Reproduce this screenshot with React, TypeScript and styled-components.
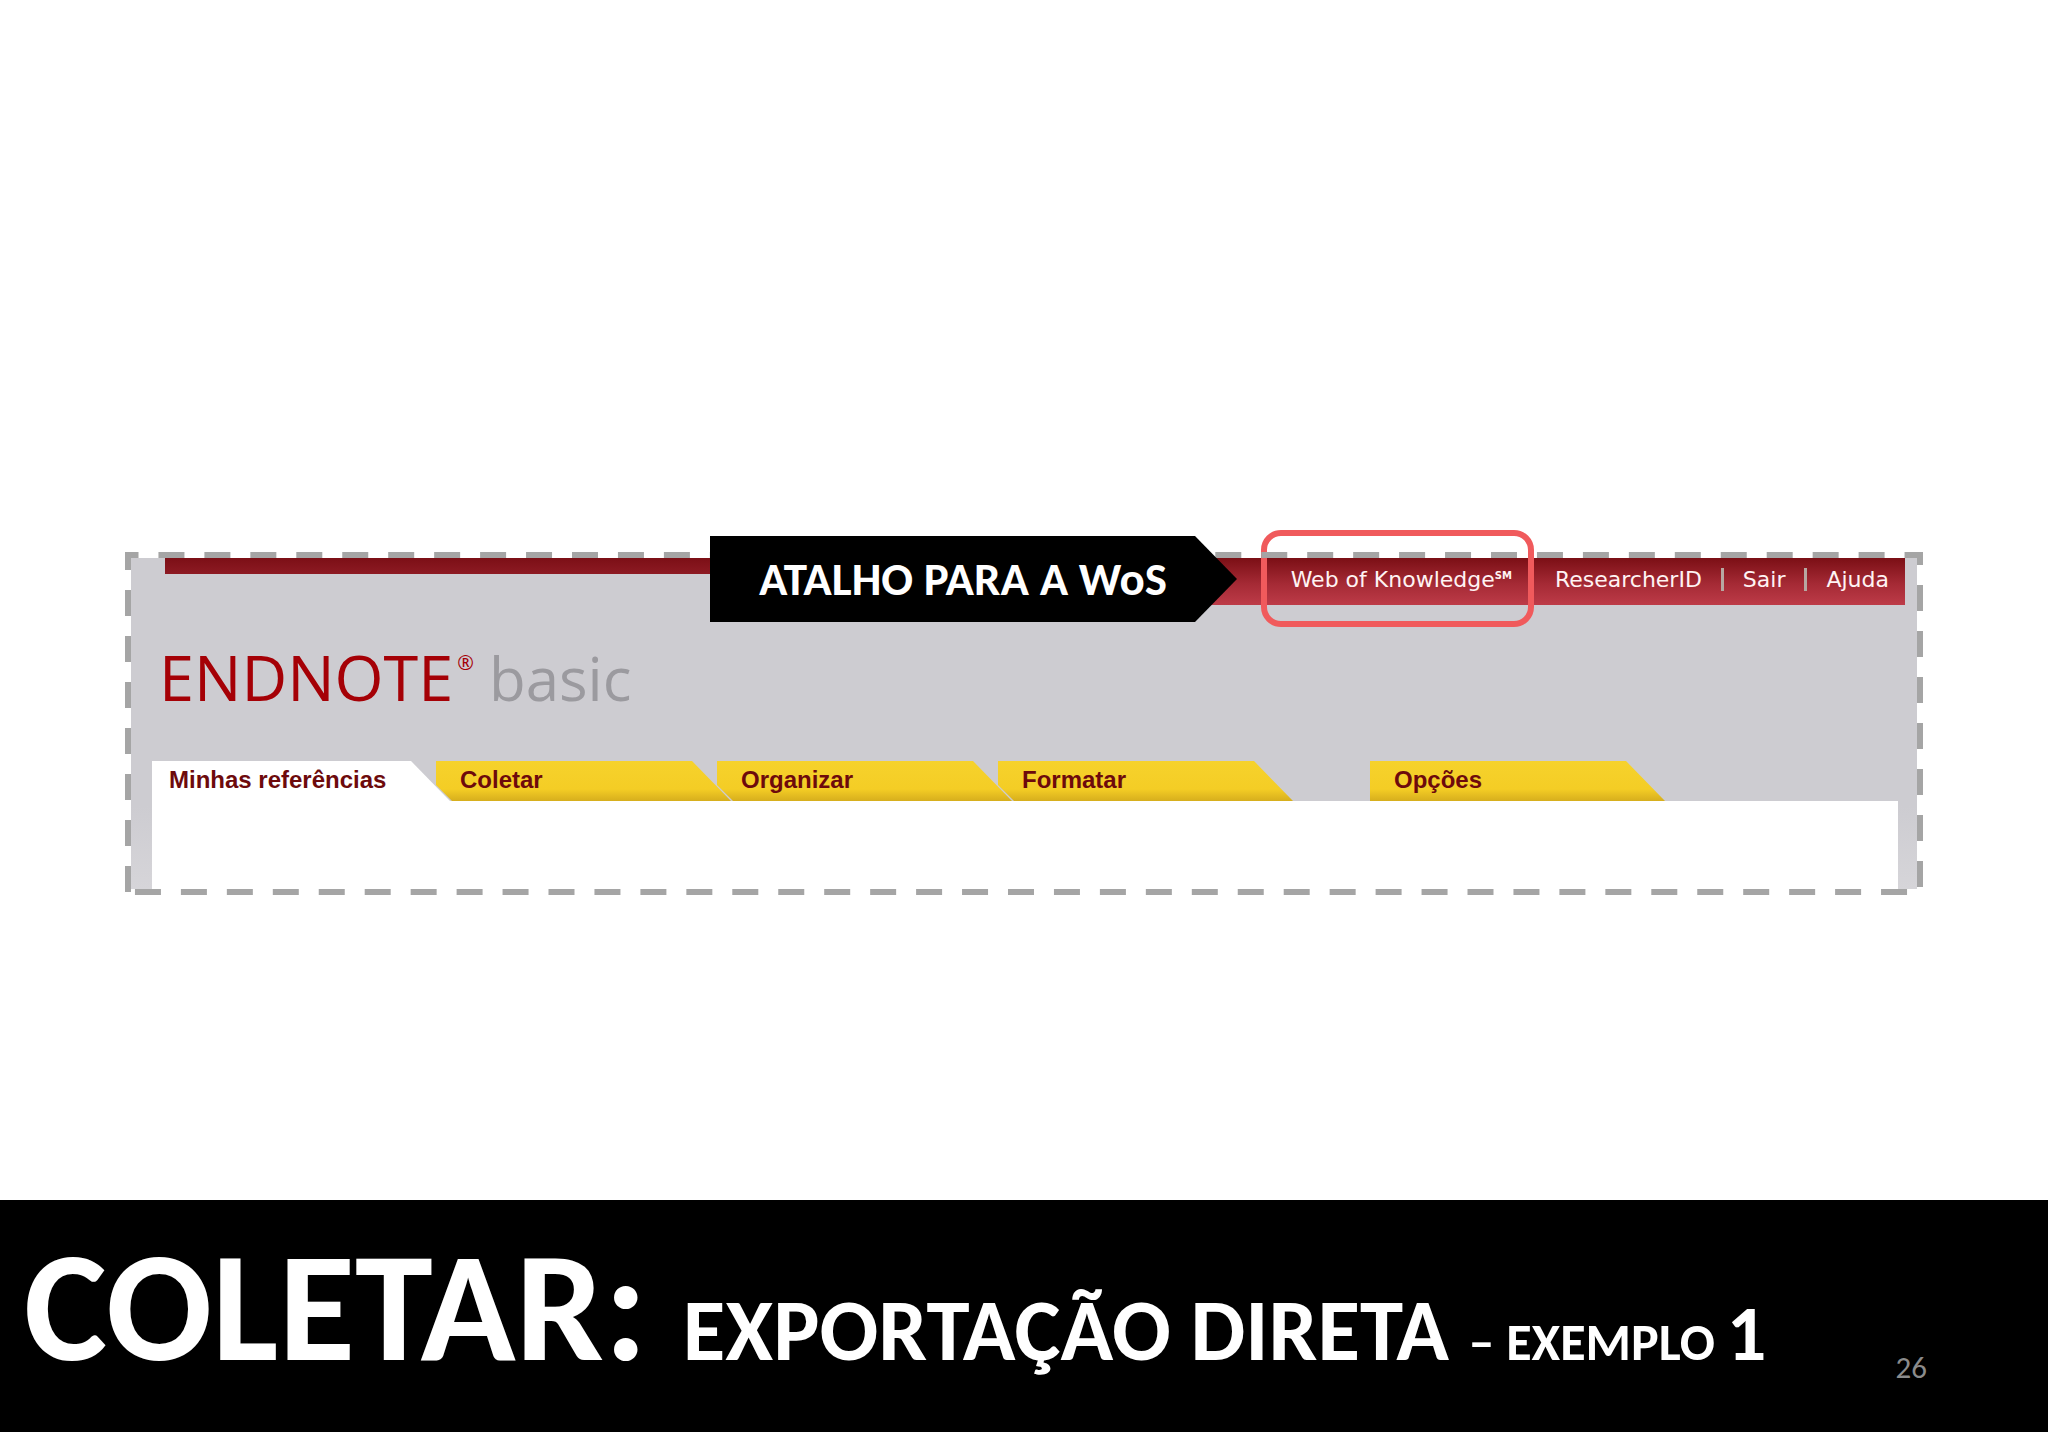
import React from "react";
import styled, { createGlobalStyle, css } from "styled-components";

const GlobalStyle = createGlobalStyle`
  *, *::before, *::after { box-sizing: border-box; }
  body { margin: 0; background: #fff; }
`;

const slideFont = `Calibri, Carlito, Lato, "Open Sans", sans-serif`;

const Slide = styled.div`
  display: flex;
  flex-direction: column;
  min-height: 100vh;
  padding-bottom: 15px;
  background: #fff;
  font-family: ${slideFont};
`;

const Stage = styled.main`
  flex: 1;
  padding: 552px 125px 80px;
`;

const Frame = styled.section`
  position: relative;
  padding: 6px;
`;

const Dashes = styled.svg`
  position: absolute;
  inset: 0;
  width: 100%;
  height: 100%;
  overflow: visible;
  pointer-events: none;
  stroke: #a5a5a5;
  stroke-width: 6;
`;

const Screen = styled.div`
  display: flex;
  flex-direction: column;
  background: linear-gradient(#cdccd1 75%, #d6d5d9);
`;

const TopBar = styled.header`
  display: flex;
  align-items: flex-start;
  margin: 0 12px 0 34px;
`;

const Strip = styled.div`
  flex: 1;
  height: 16px;
  background: linear-gradient(#7c0f16, #8d1a23);
`;

const AccountNav = styled.nav`
  display: flex;
  align-items: center;
  gap: 19px;
  height: 47px;
  padding: 0 16px 4px 100px;
  background: linear-gradient(#7b0f15, #a52a35 55%, #bd3b48);
`;

const NavLink = styled.a<{ $highlighted?: boolean }>`
  position: relative;
  color: #fff3f3;
  font: 22px/28px "DejaVu Sans", sans-serif;
  text-decoration: none;
  white-space: nowrap;

  ${({ $highlighted }) =>
    $highlighted &&
    css`
      margin-right: 24px;

      &::after {
        content: "";
        position: absolute;
        inset: -36px -22px -33px -30px;
        border: 6px solid #f05a5c;
        border-radius: 20px;
      }
    `}
`;

const Mark = styled.sup`
  font-size: 10px;
  font-weight: bold;
  line-height: 10px;
  vertical-align: 8px;
`;

const Divider = styled.span`
  width: 3px;
  height: 23px;
  background: #b7a8a2;
`;

const Callout = styled.div`
  position: absolute;
  top: -16px;
  right: 686px;
  display: flex;
  align-items: center;
  height: 86px;
  padding: 0 70px 0 49px;
  background: #000;
  color: #fff;
  font-size: 47px;
  font-weight: 700;
  line-height: 56px;
  white-space: nowrap;
  clip-path: polygon(0 0, calc(100% - 42px) 0, 100% 50%, calc(100% - 42px) 100%, 0 100%);
`;

const Brand = styled.h2`
  display: flex;
  align-items: baseline;
  margin: 0;
  padding: 30px 0 42px 28px;
  color: #a50006;
  font: 400 63px/84px "Open Sans", sans-serif;
`;

const Registered = styled.span`
  align-self: flex-start;
  margin: 16px 15px 0 4px;
  font-size: 20px;
  line-height: 24px;
`;

const Edition = styled.span`
  color: #9b9a9f;
  font-size: 60px;
  line-height: 60px;
`;

const Tabs = styled.nav`
  display: flex;
  margin-left: 21px;
`;

const Tab = styled.a<{ $active?: boolean; $detached?: boolean }>`
  flex: none;
  width: 295px;
  height: 40px;
  margin-left: -14px;
  padding-left: 24px;
  background: linear-gradient(#f6d22c, #f4cd25 70%, #d6ae1d);
  color: #6d0a0c;
  font: bold 24px/38px "Liberation Sans", sans-serif;
  text-decoration: none;
  white-space: nowrap;
  clip-path: polygon(0 0, calc(100% - 39px) 0, 100% 100%, 16px 100%, 0 24px);

  ${({ $active }) =>
    $active &&
    css`
      width: 298px;
      margin-left: 0;
      padding-left: 17px;
      background: #fff;
      clip-path: polygon(0 0, calc(100% - 39px) 0, 100% 100%, 0 100%);
    `}

  ${({ $detached }) =>
    $detached &&
    css`
      margin-left: 77px;
      clip-path: polygon(0 0, calc(100% - 39px) 0, 100% 100%, 0 100%);
    `}
`;

const Panel = styled.div`
  height: 88px;
  margin: 0 19px 0 21px;
  background: #fff;
`;

const Footer = styled.footer`
  display: flex;
  align-items: flex-start;
  justify-content: space-between;
  height: 232px;
  padding: 11px 121px 0 24px;
  background: #000;
`;

const Title = styled.h1`
  margin: 0;
  color: #fff;
  font-size: 157px;
  font-weight: 700;
  line-height: 192px;
  white-space: nowrap;
`;

const TitlePart = styled.span<{ $size: number }>`
  font-size: ${({ $size }) => $size}px;
`;

const PageNumber = styled.span`
  margin-top: 140px;
  color: #8b8b8b;
  font-size: 31px;
  line-height: 32px;
`;

const tabs = [
  { label: "Minhas referências", active: true },
  { label: "Coletar" },
  { label: "Organizar" },
  { label: "Formatar" },
  { label: "Opções", detached: true },
];

export default function App() {
  return (
    <Slide>
      <GlobalStyle />
      <Stage>
        <Frame>
          <Screen>
            <TopBar>
              <Strip />
              <AccountNav aria-label="Conta">
                <NavLink href="#wok" $highlighted>
                  Web of Knowledge<Mark>SM</Mark>
                </NavLink>
                <NavLink href="#rid">ResearcherID</NavLink>
                <Divider />
                <NavLink href="#sair">Sair</NavLink>
                <Divider />
                <NavLink href="#ajuda">Ajuda</NavLink>
              </AccountNav>
            </TopBar>
            <Brand>
              ENDNOTE<Registered>®</Registered>
              <Edition>basic</Edition>
            </Brand>
            <Tabs aria-label="Seções">
              {tabs.map((tab) => (
                <Tab key={tab.label} href="#" $active={tab.active} $detached={tab.detached}>
                  {tab.label}
                </Tab>
              ))}
            </Tabs>
            <Panel />
          </Screen>
          <Dashes aria-hidden="true">
            <svg x="3" y="-3" width="6" height="100%" overflow="visible">
              <line x1="0" y1="100%" x2="0" y2="3" strokeDasharray="26 20" />
            </svg>
            <line x1="0" y1="3" x2="100%" y2="3" strokeDasharray="26 19.95" strokeDashoffset="12.5" />
            <svg x="-3" y="0" width="100%" height="100%" overflow="visible">
              <line x1="100%" y1="0" x2="100%" y2="100%" strokeDasharray="26 20" strokeDashoffset="13" />
              <line x1="100%" y1="100%" x2="0" y2="100%" transform="translate(0 -3)" strokeDasharray="26 19.95" strokeDashoffset="33" />
            </svg>
          </Dashes>
          <Callout>ATALHO PARA A WoS</Callout>
        </Frame>
      </Stage>
      <Footer>
        <Title>
          {"COLETAR: "}
          <TitlePart $size={87}>{"EXPORTAÇÃO DIRETA "}</TitlePart>
          <TitlePart $size={52}>{"– EXEMPLO "}</TitlePart>
          <TitlePart $size={78}>1</TitlePart>
        </Title>
        <PageNumber>26</PageNumber>
      </Footer>
    </Slide>
  );
}
